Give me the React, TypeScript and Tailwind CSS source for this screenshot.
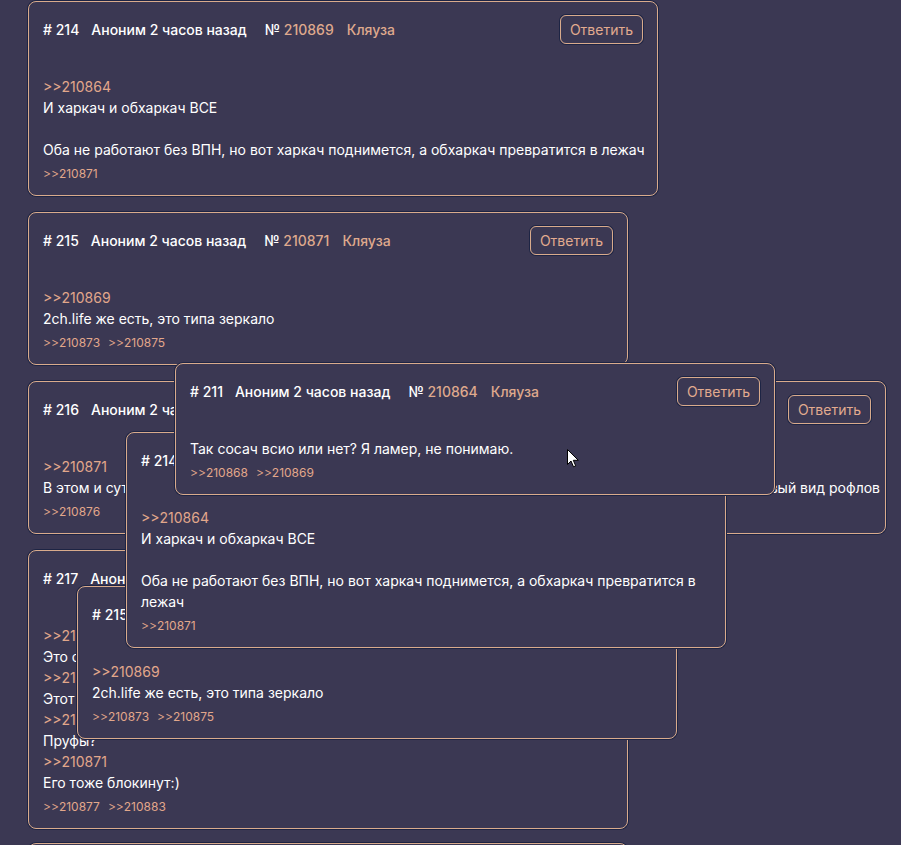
import React from "react";

type Post = {
  num: number;
  id: number;
  lines: string[];
  replies: string[];
};

const p214: Post = {
  num: 214,
  id: 210869,
  lines: [
    ">>210864",
    "И харкач и обхаркач ВСЕ",
    "",
    "Оба не работают без ВПН, но вот харкач поднимется, а обхаркач превратится в лежач",
  ],
  replies: [">>210871"],
};

const p215: Post = {
  num: 215,
  id: 210871,
  lines: [">>210869", "2ch.life же есть, это типа зеркало"],
  replies: [">>210873", ">>210875"],
};

const p216: Post = {
  num: 216,
  id: 210873,
  lines: [
    ">>210871",
    "В этом и суть, что харкач через пару недель поднимется на новом домене, а обхаркач превратится в новый вид рофлов",
  ],
  replies: [">>210876"],
};

const p217: Post = {
  num: 217,
  id: 210875,
  lines: [
    ">>210869",
    "Это одно и то же",
    ">>210871",
    "Этот тоже заблокируют",
    ">>210873",
    "Пруфы?",
    ">>210871",
    "Его тоже блокинут:)",
  ],
  replies: [">>210877", ">>210883"],
};

const p218: Post = {
  num: 218,
  id: 210876,
  lines: [">>210873", "Ну посмотрим"],
  replies: [],
};

const p211: Post = {
  num: 211,
  id: 210864,
  lines: ["Так сосач всио или нет? Я ламер, не понимаю."],
  replies: [">>210868", ">>210869"],
};

function Card({
  p,
  className,
  wrap = false,
}: {
  p: Post;
  className: string;
  wrap?: boolean;
}) {
  return (
    <div
      className={
        "rounded-lg border border-[#d9ab8c] bg-[#3b3853] px-[14px] pt-[12px] pb-[12px] shadow-[0_0_0_1px_#1d2444] " +
        className
      }
    >
      <div className="flex h-[30px] items-center whitespace-nowrap text-[14px] font-medium text-white">
        <span># {p.num}</span>
        <span className="ml-[12px]">Аноним 2 часов назад</span>
        <span className="ml-[18px]">
          № <span className="text-[#dfa98d]">{p.id}</span>
        </span>
        <span className="ml-[13px] text-[#dfa98d]">Кляуза</span>
        <button className="ml-auto h-[29px] rounded-md border border-[#d9ab8c] px-[9px] text-[14px] font-normal text-[#e2ab8f] shadow-[0_0_0_1px_#1d2444]">
          Ответить
        </button>
      </div>
      <div
        className={
          wrap
            ? "mt-[32px] text-[14px] leading-[21px] text-white"
            : "mt-[32px] whitespace-nowrap text-[14px] leading-[21px] text-white"
        }
      >
        {p.lines.map((l, i) =>
          l.startsWith(">>") ? (
            <div key={i} className="text-[#e2a78b]">
              {l}
            </div>
          ) : l === "" ? (
            <div key={i} className="h-[21px]" />
          ) : (
            <div key={i}>{l}</div>
          )
        )}
      </div>
      <div className="mt-[5px] flex h-[18px] gap-[8px] text-[12px] leading-[18px] text-[#e2a78b]">
        {p.replies.map((r) => (
          <span key={r}>{r}</span>
        ))}
      </div>
    </div>
  );
}

export default function App() {
  return (
    <div className="relative h-[845px] w-[901px] overflow-hidden bg-[#3b3853] font-[Inter,sans-serif]">
      <div className="flex flex-col gap-[16px] pl-[28px] pt-[1px]">
        <Card p={p214} className="w-[630px]" />
        <Card p={p215} className="w-[600px]" />
        <Card p={p216} className="w-[858px]" />
        <Card p={p217} className="w-[600px]" />
        <Card p={p218} className="-mt-[2px] w-[600px]" />
      </div>

      <Card p={p215} wrap className="absolute left-[77px] top-[586px] w-[600px]" />
      <Card p={p214} wrap className="absolute left-[126px] top-[432px] w-[600px]" />
      <Card p={p211} wrap className="absolute left-[175px] top-[363px] w-[600px]" />

      <svg
        className="absolute left-[567px] top-[449px]"
        width="13"
        height="19"
        viewBox="0 0 13 19"
      >
        <path
          d="M0.5 0.5 L0.5 15.5 L4 12 L6.5 17.8 L8.7 16.8 L6.3 11.3 L11.3 11.3 Z"
          fill="#ffffff"
          stroke="#000000"
          strokeWidth="1"
          strokeLinejoin="miter"
        />
      </svg>
    </div>
  );
}
